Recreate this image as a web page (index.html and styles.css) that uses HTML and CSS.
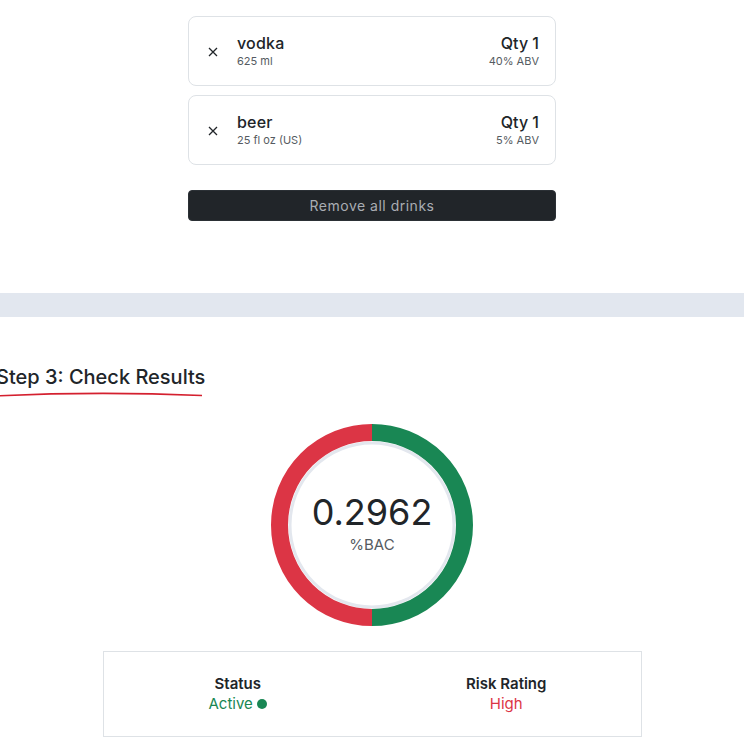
FILE: index.html
```html
<!DOCTYPE html>
<html lang="en">
<head>
<meta charset="utf-8">
<title>BAC Calculator</title>
<link rel="stylesheet" href="styles.css">
</head>
<body>
  <section class="drinks">
    <div class="drink-card">
      <span class="remove">
        <svg viewBox="0 0 10 10" width="10" height="10"><path d="M1 1L9 9M9 1L1 9" stroke="#212529" stroke-width="1.3" fill="none"/></svg>
      </span>
      <div class="drink-info">
        <div class="drink-name">vodka</div>
        <div class="drink-sub">625 ml</div>
      </div>
      <div class="drink-qty">
        <div class="qty">Qty 1</div>
        <div class="drink-sub">40% ABV</div>
      </div>
    </div>
    <div class="drink-card">
      <span class="remove">
        <svg viewBox="0 0 10 10" width="10" height="10"><path d="M1 1L9 9M9 1L1 9" stroke="#212529" stroke-width="1.3" fill="none"/></svg>
      </span>
      <div class="drink-info">
        <div class="drink-name">beer</div>
        <div class="drink-sub">25 fl oz (US)</div>
      </div>
      <div class="drink-qty">
        <div class="qty">Qty 1</div>
        <div class="drink-sub">5% ABV</div>
      </div>
    </div>
    <button class="remove-all">Remove all drinks</button>
  </section>

  <div class="band"></div>

  <section class="results">
    <h2 class="step-title">Step 3: Check Results
      <svg class="underline" viewBox="0 0 206 8" width="206" height="8" preserveAspectRatio="none"><path d="M0 5 Q100 0 206 4.5" stroke="#d4202f" stroke-width="1.6" fill="none" stroke-linecap="round"/></svg>
    </h2>

    <div class="gauge">
      <svg class="gauge-ring" viewBox="0 0 202 202" width="202" height="202">
        <circle cx="101" cy="101" r="82" fill="none" stroke="#e3e7ee" stroke-width="3"/>
        <path d="M101 8.5 A92.5 92.5 0 0 0 101 193.5" fill="none" stroke="#dc3545" stroke-width="17"/>
        <path d="M101 8.5 A92.5 92.5 0 0 1 101 193.5" fill="none" stroke="#198754" stroke-width="17"/>
      </svg>
      <div class="gauge-text">
        <div class="bac">0.2962</div>
        <div class="bac-label">%BAC</div>
      </div>
    </div>

    <div class="summary">
      <div class="summary-col">
        <div class="summary-title">Status</div>
        <div class="summary-value active">Active <span class="dot"></span></div>
      </div>
      <div class="summary-col">
        <div class="summary-title">Risk Rating</div>
        <div class="summary-value high">High</div>
      </div>
    </div>
  </section>
</body>
</html>
```

FILE: styles.css
```css
* { box-sizing: border-box; }
html, body { margin: 0; padding: 0; background: #fff; }
body {
  font-family: "Inter", "Open Sans", sans-serif;
  color: #212529;
  overflow: hidden;
}
.drinks {
  width: 368px;
  margin: 16px auto 0;
  display: flex;
  flex-direction: column;
  gap: 9px;
}
.drink-card {
  height: 70px;
  border: 1px solid #dee2e6;
  border-radius: 8px;
  display: flex;
  align-items: center;
  padding: 0 16px 0 19px;
}
.remove {
  width: 10px;
  height: 10px;
  display: flex;
  margin-right: 19px;
  margin-top: 2px;
}
.drink-info { flex: 1; }
.drink-name {
  font-size: 16px;
  font-weight: 500;
  line-height: 20px;
  letter-spacing: 0.2px;
}
.drink-sub {
  font-size: 11px;
  color: #555b61;
  line-height: 16px;
}
.drink-qty { text-align: right; }
.qty {
  font-size: 16px;
  font-weight: 500;
  line-height: 20px;
}
.remove-all {
  margin-top: 16px;
  height: 31px;
  background: #212529;
  border: 1px solid #2b3035;
  border-radius: 4px;
  color: #a9adb3;
  font-family: inherit;
  font-size: 14px;
  letter-spacing: 0.5px;
  padding: 0;
}
.band {
  margin-top: 72px;
  height: 24px;
  background: #e2e7ef;
}
.results {
  display: flex;
  flex-direction: column;
  align-items: center;
}
.step-title {
  align-self: flex-start;
  margin: 46px 0 0 -4px;
  font-size: 20px;
  font-weight: 500;
  line-height: 28px;
  position: relative;
  padding-bottom: 8px;
}
.underline {
  position: absolute;
  left: 0;
  bottom: 0;
}
.gauge {
  margin-top: 25px;
  width: 202px;
  height: 202px;
  position: relative;
  display: flex;
  align-items: center;
  justify-content: center;
}
.gauge-ring { position: absolute; inset: 0; }
.gauge-text {
  position: relative;
  text-align: center;
  margin-top: -4px;
}
.bac {
  font-size: 36px;
  line-height: 40px;
  font-weight: 400;
}
.bac-label {
  margin-top: 4px;
  font-size: 15px;
  color: #555b61;
  line-height: 18px;
}
.summary {
  margin-top: 25px;
  width: 539px;
  height: 86px;
  border: 1px solid #dee2e6;
  display: grid;
  grid-template-columns: 1fr 1fr;
  align-items: center;
}
.summary-col { text-align: center; }
.summary-title {
  font-size: 15px;
  font-weight: 600;
  line-height: 20px;
}
.summary-value {
  font-size: 15px;
  line-height: 20px;
}
.active { color: #198754; }
.high { color: #dc3545; }
.dot {
  display: inline-block;
  width: 10px;
  height: 10px;
  border-radius: 50%;
  background: #198754;
  vertical-align: 0px;
}
```
